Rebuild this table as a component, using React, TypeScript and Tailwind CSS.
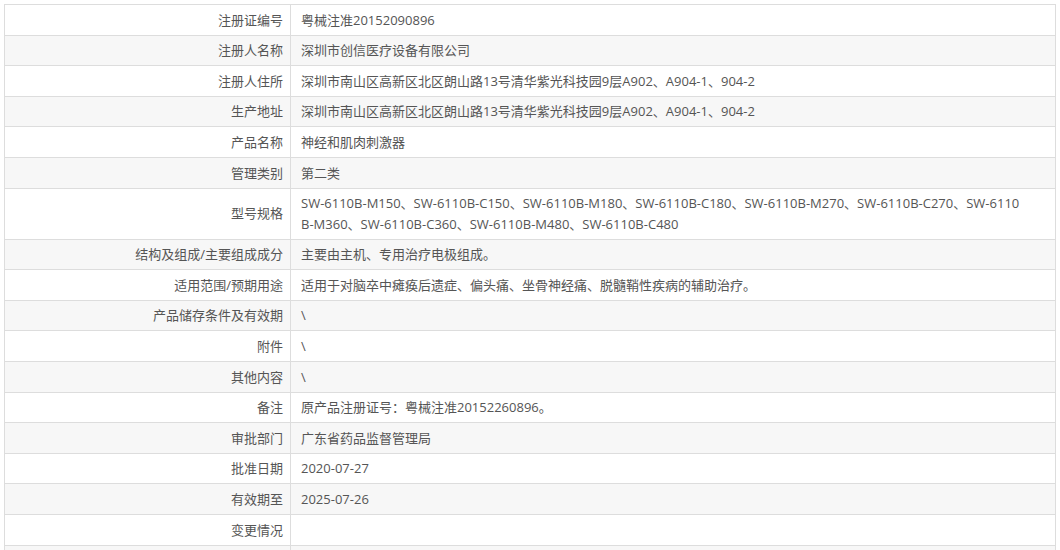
import React from "react";

const rows: [string, React.ReactNode][] = [
  ["注册证编号", "粤械注准20152090896"],
  ["注册人名称", "深圳市创信医疗设备有限公司"],
  ["注册人住所", "深圳市南山区高新区北区朗山路13号清华紫光科技园9层A902、A904-1、904-2"],
  ["生产地址", "深圳市南山区高新区北区朗山路13号清华紫光科技园9层A902、A904-1、904-2"],
  ["产品名称", "神经和肌肉刺激器"],
  ["管理类别", "第二类"],
  [
    "型号规格",
    <>
      SW-6110B-M150、SW-6110B-C150、SW-6110B-M180、SW-6110B-C180、SW-6110B-M270、SW-6110B-C270、SW-6110
      <br />
      B-M360、SW-6110B-C360、SW-6110B-M480、SW-6110B-C480
    </>,
  ],
  ["结构及组成/主要组成成分", "主要由主机、专用治疗电极组成。"],
  ["适用范围/预期用途", "适用于对脑卒中瘫痪后遗症、偏头痛、坐骨神经痛、脱髓鞘性疾病的辅助治疗。"],
  ["产品储存条件及有效期", "\\"],
  ["附件", "\\"],
  ["其他内容", "\\"],
  ["备注", "原产品注册证号：粤械注准20152260896。"],
  ["审批部门", "广东省药品监督管理局"],
  ["批准日期", "2020-07-27"],
  ["有效期至", "2025-07-26"],
  ["变更情况", ""],
  ["", ""],
];

export default function App() {
  return (
    <div
      className="w-[1060px] h-[550px] overflow-hidden bg-white pt-[4px] pl-[4px]"
      style={{ fontFamily: '"Open Sans", "Noto Sans CJK SC", sans-serif' }}
    >
      <div className="w-[1052px] border-t border-l border-r border-[#dddddd] text-[13px] leading-[20.4px] text-[#555555]">
        {rows.map(([label, value], i) => (
          <div
            key={i}
            className={`grid grid-cols-[286px_1fr] border-b border-[#dddddd] ${
              i % 2 === 1 ? "bg-[#f7f7f7]" : "bg-white"
            }`}
          >
            <div className="flex items-center justify-end border-r border-[#dddddd] py-[4.6px] pr-[7px] pl-2 text-right">
              {label}
            </div>
            <div className="flex items-center py-[4.6px] pl-[10px] pr-2">
              <div className="whitespace-nowrap">{value}</div>
            </div>
          </div>
        ))}
      </div>
    </div>
  );
}
